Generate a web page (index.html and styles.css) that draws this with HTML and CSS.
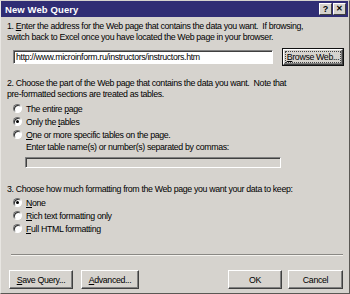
FILE: index.html
```html
<!DOCTYPE html>
<html>
<head>
<meta charset="utf-8">
<link rel="stylesheet" href="styles.css">
</head>
<body>
<div class="win">
  <div class="titlebar">
    <span class="title">New Web Query</span>
    <div class="tbtns">
      <span class="tbtn">?</span>
      <span class="tbtn x">✕</span>
    </div>
  </div>
  <div class="content">
    <p class="para p1">1. <u>E</u>nter the address for the Web page that contains the data you want.&nbsp; If browsing,<br>switch back to Excel once you have located the Web page in your browser.</p>
    <div class="urlrow">
      <div class="field url">http://www.microinform.ru/instructors/instructors.htm</div>
      <div class="btn browse"><span class="focus"><u>B</u>rowse Web...</span></div>
    </div>
    <p class="para p2">2. Choose the part of the Web page that contains the data you want.&nbsp; Note that<br>pre-formatted sections are treated as tables.</p>
    <div class="radios r1">
      <div class="radio"><span class="rb"></span><span>The entire <u>p</u>age</span></div>
      <div class="radio"><span class="rb on"></span><span>Only the <u>t</u>ables</span></div>
      <div class="radio"><span class="rb"></span><span><u>O</u>ne or more specific tables on the page.</span></div>
    </div>
    <div class="tables">
      <div class="lbl">Enter table name(s) or number(s) separated by commas:</div>
      <div class="field dis"></div>
    </div>
    <p class="para p3">3. Choose how much formatting from the Web page you want your data to keep:</p>
    <div class="radios r2">
      <div class="radio"><span class="rb on"></span><span><u>N</u>one</span></div>
      <div class="radio"><span class="rb"></span><span><u>R</u>ich text formatting only</span></div>
      <div class="radio"><span class="rb"></span><span><u>F</u>ull HTML formatting</span></div>
    </div>
    <div class="sep"></div>
    <div class="btnrow">
      <div class="btn save"><span><u>S</u>ave Query...</span></div>
      <div class="btn adv"><span><u>A</u>dvanced...</span></div>
      <div class="spacer"></div>
      <div class="btn ok"><span>OK</span></div>
      <div class="btn cancel"><span>Cancel</span></div>
    </div>
  </div>
</div>
</body>
</html>
```
FILE: styles.css
```css
html, body {
  margin: 0;
  padding: 0;
  background: #d6d3ce;
}
.win {
  width: 350px;
  height: 294px;
  box-sizing: border-box;
  border: 1px solid #5a5854;
  border-top-color: #d6d3ce;
  border-left-color: #e8e6e2;
  background: #d6d3ce;
  font-family: "Liberation Sans", Arial, sans-serif;
  font-size: 8.8px;
  letter-spacing: -0.35px;
  color: #000;
  display: flex;
  flex-direction: column;
  overflow: hidden;
}
.titlebar {
  height: 16px;
  flex: none;
  background: #302d74;
  display: flex;
  align-items: center;
  justify-content: space-between;
  padding: 0 2px 0 4px;
  margin: 0 1px 0 0;
}
.title {
  color: #fff;
  font-weight: bold;
  font-size: 9.5px;
  letter-spacing: 0.1px;
}
.tbtns {
  display: flex;
  gap: 1px;
}
.tbtn {
  width: 11px;
  height: 10px;
  background: #d6d3ce;
  border: 1px solid;
  border-color: #fff #404040 #404040 #fff;
  font-size: 9px;
  font-weight: bold;
  letter-spacing: 0;
  line-height: 10px;
  text-align: center;
  color: #000;
}
.tbtn.x { font-size: 8px; }
.content {
  padding: 0 6px 0 6px;
  display: flex;
  flex-direction: column;
  flex: 1;
}
.para {
  margin: 0;
  line-height: 11px;
  white-space: nowrap;
}
.p1 { margin-top: 4px; }
.urlrow {
  display: flex;
  align-items: center;
  margin-top: 6px;
  height: 16px;
}
.field {
  background: #fff;
  border: 1px solid;
  border-color: #808080 #fff #fff #808080;
  box-shadow: inset 1px 1px 0 #404040;
  box-sizing: border-box;
  padding: 0 2px;
  white-space: nowrap;
}
.url {
  margin-left: 6px;
  width: 260px;
  height: 14px;
  line-height: 12px;
}
.btn {
  background: #d6d3ce;
  border: 1px solid;
  border-color: #fff #404040 #404040 #fff;
  box-shadow: inset -1px -1px 0 #808080;
  display: flex;
  align-items: center;
  justify-content: center;
  box-sizing: border-box;
  white-space: nowrap;
}
.browse {
  margin-left: 10px;
  width: 60px;
  height: 16px;
  outline: 1px solid #111;
}
.browse .focus {
  border: 1px dotted #444;
  padding: 0 1px;
  line-height: 10px;
}
.p2 { margin-top: 13px; }
.radios {
  display: flex;
  flex-direction: column;
  margin-left: 6px;
}
.r1 { margin-top: 2px; }
.radio {
  display: flex;
  align-items: center;
  height: 13px;
  gap: 4px;
  white-space: nowrap;
}
.rb {
  flex: none;
  width: 9px;
  height: 9px;
  border-radius: 50%;
  background: #fff;
  box-sizing: border-box;
  border: 1px solid;
  border-color: #707070 #fff #fff #707070;
  box-shadow: inset 1px 1px 0 #303030;
  position: relative;
}
.rb.on::after {
  content: "";
  position: absolute;
  left: 2px;
  top: 2px;
  width: 3px;
  height: 3px;
  border-radius: 50%;
  background: #000;
}
.tables {
  margin-top: 1px;
}
.lbl {
  margin-left: 19px;
  line-height: 11px;
  white-space: nowrap;
}
.dis {
  margin-top: 4px;
  margin-left: 18px;
  width: 256px;
  height: 11px;
  background: #d6d3ce;
}
.p3 { margin-top: 16px; }
.r2 { margin-top: 1px; }
.sep {
  margin-top: 19px;
  height: 0;
  border-top: 1px solid #8a8884;
  border-bottom: 1px solid #f4f2ee;
  margin-left: 4px;
  margin-right: 0;
}
.btnrow {
  display: flex;
  margin-top: 14px;
  height: 19px;
}
.btnrow .btn { height: 19px; }
.save { width: 64px; margin-left: 2px; }
.adv { width: 58px; margin-left: 8px; }
.spacer { flex: 1; }
.ok { width: 54px; }
.cancel { width: 55px; margin-left: 6px; }
```
